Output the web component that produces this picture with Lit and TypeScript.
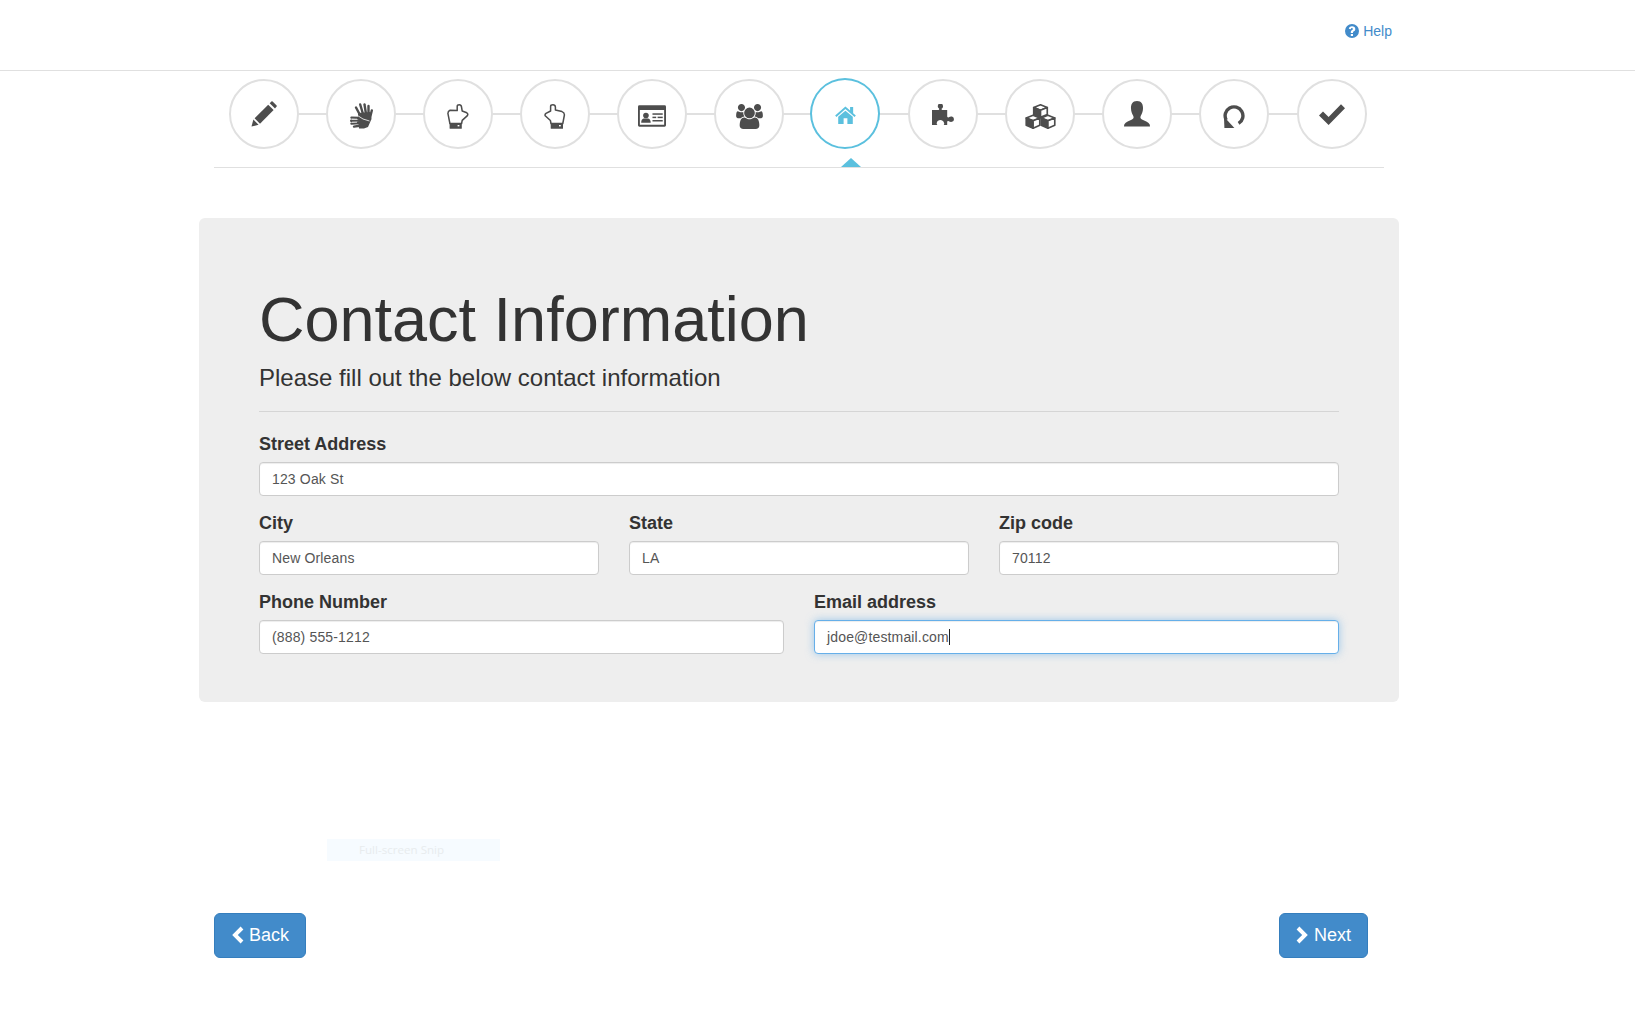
import { LitElement, html, css, svg } from "lit";
import { customElement } from "lit/decorators.js";

const icons: Record<string, { w: number; h: number; vb: string; low?: boolean; body: unknown }> = {
  pencil: { w: 26, h: 26, vb: "0 0 26 26", body: svg`<path d="M0.5 25.5 L2.4 18.6 L7.6 23.8 Z"/><path d="M3.6 17.3 L17.2 3.7 L22.6 9.1 L9 22.7 Z"/><path d="M18.7 2.2 L20.4 0.5 Q21 0 21.6 0.5 L25.6 4.5 Q26 5.1 25.6 5.6 L24 7.5 Z"/>` },
  sign: { w: 23, h: 26, vb: "0 0 23 26", low: true, body: svg`<g stroke="currentColor" stroke-linecap="round" fill="none" stroke-width="2.4"><path d="M10 12 L6 4.5"/><path d="M13 11 L10.2 1.5"/><path d="M16 11 L14.5 1.5"/><path d="M18.5 13 L18.5 3"/><path d="M20 15 L21.8 7.5"/><path d="M10 15 L1.5 14.6"/><path d="M10 17.6 L1.2 17.8"/><path d="M10 20 L1.5 20.6"/><path d="M11 22.5 L4 23.6"/></g><path d="M8 10 L20 9 L21.5 16 L18 24 L14 25.6 L9 25.5 L8 15 Z"/><g stroke="#fff" fill="none" stroke-width="0.8"><path d="M6 11.5 L13 16 L19.5 18"/><path d="M2 16.2 L7 16.2"/><path d="M2 19.2 L7 19.2"/></g>` },
  handA: { w: 22, h: 25, vb: "0 0 22 25", low: true, body: svg`<path fill="none" stroke="currentColor" stroke-width="1.5" stroke-linejoin="round" d="M3 6.2 L10.2 6.6 V2.4 Q10.2 .8 12.3 .8 Q14.2 .8 14.5 3 L15.2 7 L19.8 8.8 Q21.4 9.8 20.4 11.6 L15.2 16.4 L14.6 19.5 H2.9 L.9 9.4 Q.9 7 3 6.2 Z"/><rect x="2.6" y="19" width="12.2" height="5.8" rx=".6"/><rect x="10.6" y="21" width="1.8" height="1.4" fill="#fff"/>` },
  handB: { w: 22, h: 25, vb: "0 0 22 25", low: true, body: svg`<path fill="none" stroke="currentColor" stroke-width="1.5" stroke-linejoin="round" d="M6.6 7 V2.4 Q6.6 .8 9 .8 Q11.2 .8 11.4 3 V6 L18 7.6 Q20.6 8.6 20.4 11 L18.8 19.5 H7 L6.4 16.5 L1.2 11.8 Q.6 10.6 2 9.4 Z"/><rect x="6.7" y="19" width="12.3" height="5.8" rx=".6"/><rect x="15" y="21" width="1.8" height="1.4" fill="#fff"/>` },
  card: { w: 28, h: 22, vb: "0 0 30 23", low: true, body: svg`<path fill-rule="evenodd" d="M1.5 0 H28.5 Q30 0 30 1.5 V21.5 Q30 23 28.5 23 H1.5 Q0 23 0 21.5 V1.5 Q0 0 1.5 0 Z M2 5 V21 H28 V5 Z"/><circle cx="8.5" cy="11" r="3"/><path d="M3.4 18.6 Q3.6 14.6 6 14.2 L11 14.2 Q13.4 14.6 13.6 18.6 Z"/><rect x="15.5" y="8.6" width="11" height="1.6"/><rect x="15.5" y="12.2" width="4" height="1.6"/><rect x="21" y="12.2" width="5.5" height="1.6"/><rect x="15.5" y="15.8" width="11" height="1.6"/>` },
  users: { w: 27, h: 25, vb: "0 0 1920 1792", low: true, body: svg`<path d="M593 896q-162 5-265 128h-134q-82 0-138-40.5t-56-118.5q0-353 124-353 6 0 43.5 21t97.5 42.5 119 21.5q67 0 133-23-5 37-5 66 0 139 81 256zm1071 637q0 120-73 189.5t-194 69.5h-874q-121 0-194-69.5t-73-189.5q0-53 3.5-103.5t14-109 26.5-108.5 43-97.5 62-81 85.5-53.5 111.5-20q10 0 43 21.5t73 48 107 48 135 21.5 135-21.5 107-48 73-48 43-21.5q61 0 111.5 20t85.5 53.5 62 81 43 97.5 26.5 108.5 14 109 3.5 103.5zm-1024-1277q0 106-75 181t-181 75-181-75-75-181 75-181 181-75 181 75 75 181zm704 384q0 159-112.5 271.5t-271.5 112.5-271.5-112.5-112.5-271.5 112.5-271.5 271.5-112.5 271.5 112.5 112.5 271.5zm576 225q0 78-56 118.5t-138 40.5h-134q-103-123-265-128 81-117 81-256 0-29-5-66 66 23 133 23 59 0 119-21.5t97.5-42.5 43.5-21q124 0 124 353zm-128-609q0 106-75 181t-181 75-181-75-75-181 75-181 181-75 181 75 75 181z"/>` },
  home: { w: 23, h: 18, vb: "0 0 23 20", low: true, body: svg`<path d="M0 10.6 L11.4 0.6 L16.6 5 V1 H20 V8 L23 10.6 L21.6 12.2 L11.4 3.4 L1.4 12.2 Z"/><path d="M3.4 12 L11.4 5.2 L19.6 12 V20 H13.6 V13.6 H9.4 V20 H3.4 Z"/>` },
  puzzle: { w: 23, h: 21, vb: "0 0 23 21", body: svg`<path d="M0 6 H6.5 C7.2 6 7.4 5.3 7 4.6 C6 4 5.6 3 5.8 2.2 A2.6 2.6 0 0 1 11 2.2 C11.1 3 10.6 4 9.8 4.6 C9.4 5.3 9.6 6 10.3 6 H15.2 V12.6 C15.2 13.3 16 13.6 16.8 13.2 C17.6 12.6 19 12.4 20 12.6 A2.7 2.7 0 0 1 20 17.8 C19 18 17.6 17.8 16.8 17.2 C16 16.8 15.2 17 15.2 17.8 V21 H11.6 C12.2 20.4 12.4 19.8 12 18.8 C11.4 16.8 10 16 8.4 16 C6.6 16 5.2 17 4.8 18.8 C4.5 19.8 4.8 20.5 5.4 21 H0 Z"/>` },
  cubes: { w: 31, h: 25, vb: "1 0.2 29 24", low: true, body: svg`<g stroke="currentColor" stroke-width="1.6" stroke-linejoin="round"><path fill="#fff" d="M15.5 1 L22 3.6 L15.5 6.2 L9 3.6 Z"/><path d="M9 3.6 L15.5 6.2 V13 L9 10.4 Z"/><path fill="#fff" d="M22 3.6 V10.4 L15.5 13 V6.2 Z"/><path fill="#fff" d="M8.4 11 L14.8 13.6 L8.4 16.2 L1.8 13.6 Z"/><path d="M1.8 13.6 L8.4 16.2 V23.4 L1.8 20.6 Z"/><path fill="#fff" d="M14.8 13.6 V20.6 L8.4 23.4 V16.2 Z"/><path fill="#fff" d="M22.6 11 L29.2 13.6 L22.6 16.2 L16.2 13.6 Z"/><path d="M16.2 13.6 L22.6 16.2 V23.4 L16.2 20.6 Z"/><path fill="#fff" d="M29.2 13.6 V20.6 L22.6 23.4 V16.2 Z"/></g>` },
  user: { w: 26, h: 26, vb: "0 0 26 26", body: svg`<path d="M13 0 C17.6 0 19.2 3.4 19 7.6 C18.9 10.4 18.2 12.6 16.8 14.8 C16 16.4 16.4 17.6 18 18.6 C20.6 20.2 24.4 21 25.6 23.2 Q26 24.4 26 25.4 H0 Q0 24.4 0.4 23.2 C1.6 21 5.4 20.2 8 18.6 C9.6 17.6 10 16.4 9.2 14.8 C7.8 12.6 7.1 10.4 7 7.6 C6.8 3.4 8.4 0 13 0 Z"/>` },
  repeat: { w: 22, h: 23, vb: "0 0 22 23", low: true, body: svg`<path fill="none" stroke="currentColor" stroke-width="3.4" d="M3.2 15 A8.9 8.9 0 1 1 15.6 18.4"/><path d="M1 11.8 L1.4 23 L11.4 23 Z"/>` },
  ok: { w: 26, h: 21, vb: "0 0 26 21", body: svg`<path d="M0 11.4 L4 7.4 L9.6 13 L22 0.2 L26 4.2 L9.6 21 Z"/>` },
};

const steps = ["pencil", "sign", "handA", "handB", "card", "users", "home", "puzzle", "cubes", "user", "repeat", "ok"];

@customElement("app-root")
export class AppRoot extends LitElement {
  static styles = css`
    :host { display: block; font-family: "Liberation Sans", Arial, sans-serif; color: #333; }
    * { box-sizing: border-box; }
    .topbar { height: 71px; border-bottom: 1px solid #e0e0e0; display: flex; justify-content: flex-end; align-items: flex-start; padding: 23px 243px 0 0; }
    .help { display: flex; align-items: center; gap: 4px; color: #428bca; font-size: 14px; line-height: 16px; }
    .help svg { display: block; width: 14px; height: 14px; fill: #428bca; }
    .main { width: 1200px; margin-left: 199px; }
    .wizard { position: relative; margin: 0 15px; width: 1170px; height: 97px; border-bottom: 1px solid #e0e0e0; padding: 8px 0 0 15px; }
    .steps { display: flex; align-items: center; height: 70px; width: 1137.6px; justify-content: space-between; background: linear-gradient(#e0e0e0, #e0e0e0) center / 100% 2px no-repeat; }
    .circle { width: 70px; height: 70px; border-radius: 50%; background: #fff; border: 2px solid #e0e0e0; display: flex; align-items: center; justify-content: center; color: #4d4d4d; flex: none; }
    .circle svg { display: block; fill: currentColor; }
    .circle svg.low { margin-top: 4px; }
    .circle.active { border-color: #5bc0de; color: #5bc0de; transform: translate(-1px, -1px); height: 71px; }
    .arrow { position: absolute; left: 627px; bottom: 0; width: 0; height: 0; border-left: 10px solid transparent; border-right: 10px solid transparent; border-bottom: 9px solid #5bc0de; }
    .jumbo { margin-top: 50px; height: 484px; background: #eee; border-radius: 6px; padding: 63px 60px 0; }
    h1 { margin: 0; font-size: 63px; font-weight: 400; line-height: 76px; color: #333; }
    .lead { font-size: 24px; line-height: 34px; margin-top: 4px; color: #333; font-weight: 300; }
    hr { border: 0; border-top: 1px solid #d5d5d5; margin: 16px 0 0; }
    .row { display: grid; gap: 30px; margin-top: 17px; }
    .r1 { grid-template-columns: 1fr; margin-top: 22px; }
    .r3 { grid-template-columns: 1fr 1fr 1fr; }
    .r2 { grid-template-columns: 1fr 1fr; }
    label { display: block; font-size: 18px; font-weight: 700; line-height: 20px; margin-bottom: 8px; color: #333; }
    .input { height: 34px; background: #fff; border: 1px solid #ccc; border-radius: 4px; padding: 0 12px; font-size: 14px; line-height: 32px; letter-spacing: .15px; color: #555; box-shadow: inset 0 1px 1px rgba(0,0,0,.075); display: flex; align-items: center; }
    .input.focus { border-color: #66afe9; box-shadow: inset 0 1px 1px rgba(0,0,0,.075), 0 0 8px rgba(102,175,233,.6); }
    .caret { display: inline-block; width: 1px; height: 16px; background: #222; }
    .snip { margin: 137px 0 0 128px; width: 173px; height: 22px; background: #f6fbff; color: #e8ecee; font-size: 11.6px; line-height: 22px; padding-left: 32px; font-family: "Open Sans", sans-serif; }
    .nav { display: flex; justify-content: space-between; margin: 52px 31px 0 15px; }
    .btn { display: flex; align-items: center; gap: 5px; height: 45px; padding: 0 16px 2px; background: #428bca; border: 1px solid #357ebd; border-radius: 6px; color: #fff; font-size: 18px; line-height: 24px; }
    .btn svg { display: block; width: 13px; height: 18px; fill: #fff; }
  `;

  private field(label: string, value: string, focus = false) {
    return html`<div><label>${label}</label><div class="input ${focus ? "focus" : ""}"><span>${value}</span>${focus ? html`<span class="caret"></span>` : ""}</div></div>`;
  }

  render() {
    return html`
      <div class="topbar">
        <div class="help">
          <svg viewBox="0 0 14 14"><path fill-rule="evenodd" d="M7 0a7 7 0 1 1 0 14A7 7 0 0 1 7 0Zm-1.2 10v2h2.2v-2ZM7 2.2C5.2 2.2 4 3.2 3.8 4.8l2 .4c.1-.7.5-1.1 1.1-1.1.6 0 1 .3 1 .8 0 .5-.4.8-.9 1.2-.8.6-1.2 1.2-1.2 2.2v.6h2.2v-.4c0-.5.3-.8.9-1.2.8-.6 1.4-1.2 1.4-2.4 0-1.6-1.3-2.7-3.3-2.7Z"/></svg>
          <span>Help</span>
        </div>
      </div>
      <div class="main">
        <div class="wizard">
          <div class="steps">
            ${steps.map((s) => {
              const i = icons[s];
              return html`<div class="circle ${s === "home" ? "active" : ""}"><svg class=${i.low ? "low" : ""} width=${i.w} height=${i.h} viewBox=${i.vb}>${i.body}</svg></div>`;
            })}
          </div>
          <div class="arrow"></div>
        </div>
        <div class="jumbo">
          <h1>Contact Information</h1>
          <div class="lead">Please fill out the below contact information</div>
          <hr />
          <div class="row r1">${this.field("Street Address", "123 Oak St")}</div>
          <div class="row r3">${this.field("City", "New Orleans")}${this.field("State", "LA")}${this.field("Zip code", "70112")}</div>
          <div class="row r2">${this.field("Phone Number", "(888) 555-1212")}${this.field("Email address", "jdoe@testmail.com", true)}</div>
        </div>
        <div class="snip">Full-screen Snip</div>
        <div class="nav">
          <div class="btn"><svg viewBox="0 0 13 18"><path d="M9.6 0.6 L12.4 3.4 L6.8 9 L12.4 14.6 L9.6 17.4 L1.2 9 Z"/></svg><span>Back</span></div>
          <div class="btn"><svg viewBox="0 0 13 18"><path d="M3.4 0.6 L0.6 3.4 L6.2 9 L0.6 14.6 L3.4 17.4 L11.8 9 Z"/></svg><span>Next</span></div>
        </div>
      </div>
    `;
  }
}
